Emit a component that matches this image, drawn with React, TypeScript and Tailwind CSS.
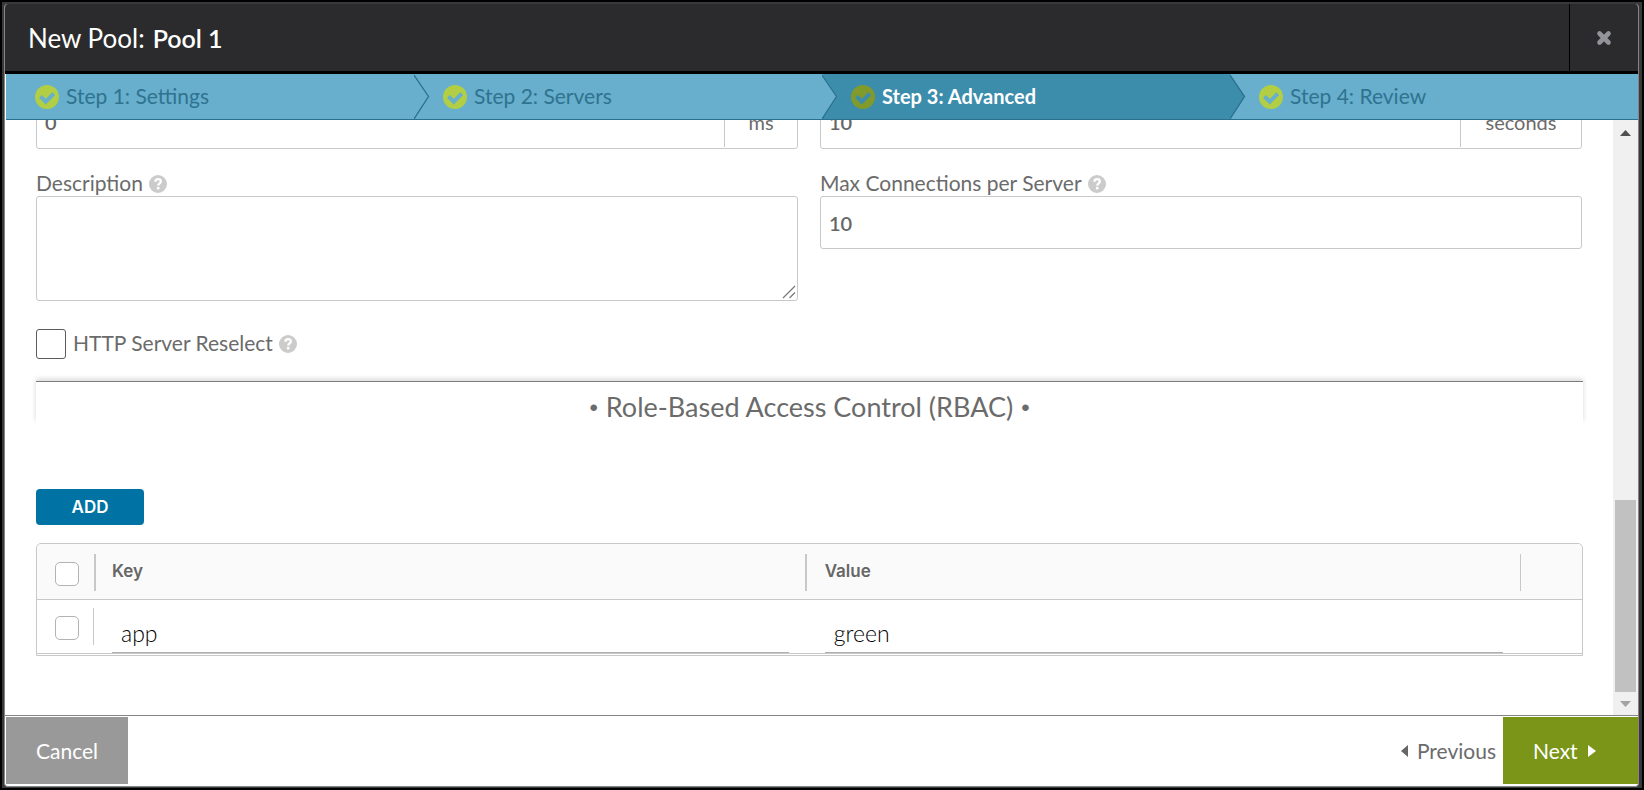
import React from "react";
import clsx from "clsx";

function CheckBadge() {
  return (
    <svg viewBox="0 0 24 24" className="size-6 shrink-0" aria-hidden="true">
      <circle cx="12" cy="12" r="12" fill="currentColor" />
      <path d="M5.500 11.400l5.300 5.300L18.800 8.700" fill="none" strokeWidth="4" className="stroke-[var(--step)]" />
    </svg>
  );
}

function StepArrow() {
  return (
    <svg viewBox="0 0 16 45" className="absolute top-0 left-full z-10 h-full w-4" aria-hidden="true">
      <path d="M0 0L15 22.500L0 45Z" className="fill-[var(--step)]" />
      <path d="M0 1L14.500 22.500L0 45" fill="none" stroke="#2b718d" strokeWidth="1.3" />
    </svg>
  );
}

function Help({ label }: { label: string }) {
  return (
    <button type="button" aria-label={label} className="shrink-0">
      <svg viewBox="0 0 18 18" className="size-[18px]" aria-hidden="true">
        <circle cx="9" cy="9" r="9" fill="#cbcbcb" />
        <path
          d="M6.200 6.700C6.500 4.900 7.500 4.200 9.100 4.200C10.800 4.200 11.800 5.100 11.800 6.500C11.800 8.400 9.300 8.400 9.200 10.600"
          fill="none"
          stroke="#fff"
          strokeWidth="2.300"
        />
        <rect x="7.900" y="11.900" width="2.500" height="2.500" fill="#fff" />
      </svg>
    </button>
  );
}

const steps = [
  { name: "Step 1: Settings" },
  { name: "Step 2: Servers" },
  { name: "Step 3: Advanced", active: true },
  { name: "Step 4: Review" },
];

function Steps() {
  return (
    <nav className="ml-px shrink-0 border-b border-[#2b718d]">
      <ol className="grid grid-cols-4">
        {steps.map((s, i) => (
          <li
            key={s.name}
            className={clsx(
              "relative",
              s.active ? "bg-[#3c8cac] [--step:#3c8cac]" : "bg-[#67afcc] [--step:#67afcc]"
            )}
          >
            <a
              href="#"
              className={clsx(
                "flex h-[45px] items-center gap-[7px] pl-[29px]",
                s.active ? "text-[20px] font-bold text-white" : "text-[21px] text-[#2f7390]"
              )}
            >
              <span className={s.active ? "text-[#809a2b]" : "text-[#b1ce45]"}>
                <CheckBadge />
              </span>
              <span className="pb-0.5">{s.name}</span>
            </a>
            {i < steps.length - 1 && <StepArrow />}
          </li>
        ))}
      </ol>
    </nav>
  );
}

function UnitField({ value, unit, label, unitClass }: { value: string; unit: string; label: string; unitClass: string }) {
  return (
    <div className="flex h-[53px] rounded-[3px] border border-[#c8c8c8] pb-px">
      <input aria-label={label} defaultValue={value} className="min-w-0 flex-1 px-2 text-xl font-semibold text-[#666] outline-none" />
      <span className={clsx("flex items-center justify-center border-l border-[#c8c8c8] text-xl", unitClass)}>{unit}</span>
    </div>
  );
}

const box = "block appearance-none rounded-[5px] border border-[#b3b3b3] bg-white size-6";
const headCell = "border-b border-[#c8c8c8] bg-[#fafafa] pt-[10px] pb-2 font-semibold";
const cellInput = "block h-[37px] w-full border-b border-[#b0b0b0] px-[9px] pb-0.5 text-[23px] font-light text-black outline-none";

function RbacTable() {
  return (
    <div className="rounded-t-[5px] border border-[#c8c8c8] pb-px">
      <table className="w-full table-fixed border-separate border-spacing-0 text-left">
        <colgroup>
          <col className="w-[59px]" />
          <col className="w-[46%]" />
          <col />
          <col className="w-[61px]" />
        </colgroup>
        <thead className="font-['Inter',sans-serif] text-[17px] text-[#666]">
          <tr>
            <th className={clsx(headCell, "rounded-tl-[5px]")}>
              <div className="flex h-[37px] items-center border-r-2 border-[#c8c8c8] pt-0.5 pl-[18px]">
                <input type="checkbox" aria-label="Select all rows" className={box} />
              </div>
            </th>
            <th className={headCell}>
              <div className="flex h-[37px] items-center border-r-2 border-[#c8c8c8] pb-0.5 pl-4">Key</div>
            </th>
            <th className={headCell}>
              <div className="flex h-[37px] items-center border-r border-[#c8c8c8] pb-0.5 pl-[18px]">Value</div>
            </th>
            <td className="rounded-tr-[5px] border-b border-[#c8c8c8] bg-[#fafafa]" />
          </tr>
        </thead>
        <tbody>
          <tr>
            <td className="border-b border-[#c8c8c8] py-2 pr-0.5">
              <div className="flex h-[37px] items-center border-r border-[#c8c8c8] pt-0.5 pl-[18px]">
                <input type="checkbox" aria-label="Select row app" className={box} />
              </div>
            </td>
            <td className="border-b border-[#c8c8c8] pt-4 pr-[18px] pl-4 align-bottom">
              <input aria-label="Key" defaultValue="app" className={cellInput} />
            </td>
            <td className="border-b border-[#c8c8c8] pt-4 pr-[18px] pl-[18px] align-bottom">
              <input aria-label="Value" defaultValue="green" className={cellInput} />
            </td>
            <td className="border-b border-[#c8c8c8]" />
          </tr>
        </tbody>
      </table>
    </div>
  );
}

function Scrollbar() {
  return (
    <div className="flex w-[25px] shrink-0 flex-col items-center bg-[#f0f0f0]" aria-hidden="true">
      <svg viewBox="0 0 11 6" className="mt-[10px] h-[6px] w-[11px]">
        <path d="M5.500 0L11 6H0Z" fill="#505050" />
      </svg>
      <div className="flex-1" />
      <div className="h-[192px] w-[21px] bg-[#c1c1c1]" />
      <svg viewBox="0 0 11 6" className="mt-[9px] mb-2 h-[6px] w-[11px]">
        <path d="M0 0H11L5.500 6Z" fill="#a3a3a3" />
      </svg>
    </div>
  );
}

export default function App() {
  return (
    <div className="flex h-screen bg-black p-[2px] font-['Lato','Liberation_Sans',sans-serif]">
      <div className="flex min-w-0 flex-1 flex-col bg-[#38393a] pt-[2px] pr-[3px] pb-px pl-[2px]">
        <section
          role="dialog"
          aria-labelledby="title"
          className="flex min-h-0 flex-1 flex-col overflow-hidden rounded-[4px] border-x border-b border-[#858585] bg-white text-[#6b6b6b]"
        >
          <header className="flex h-[70px] shrink-0 border-b-[3px] border-black bg-[#2b2b2d] text-white">
            <h1 id="title" className="flex flex-1 items-center gap-2 pt-0.5 pl-[23px] text-[26px]">
              <span>New Pool:</span>
              <span className="text-[25px] font-semibold">Pool 1</span>
            </h1>
            <button type="button" aria-label="Close" className="flex w-[69px] items-center justify-center border-l border-black">
              <svg viewBox="0 0 16 16" className="size-4" aria-hidden="true">
                <path d="M3.500 3.500L12.500 12.500M12.500 3.500L3.500 12.500" stroke="#93939b" strokeWidth="4.600" strokeLinecap="round" />
              </svg>
            </button>
          </header>

          <Steps />

          <div className="flex min-h-0 flex-1 border-b border-[#858585]">
            <main className="flex min-w-0 flex-1 flex-col justify-end overflow-hidden pr-[30px] pb-[59px] pl-[31px] text-[21px]">
              <div className="grid shrink-0 grid-cols-2 gap-x-[22px] pr-px pb-[23px]">
                <UnitField label="Delay" value="0" unit="ms" unitClass="w-[73px]" />
                <UnitField label="Timeout" value="10" unit="seconds" unitClass="w-[121px]" />
              </div>

              <div className="grid shrink-0 grid-cols-2 gap-x-[22px] pr-px">
                <div>
                  <div className="flex h-6 items-center gap-[6px]">
                    <label htmlFor="description" className="pb-0.5">Description</label>
                    <Help label="About description" />
                  </div>
                  <div className="relative">
                    <textarea id="description" className="block h-[105px] w-full resize-none rounded-[3px] border border-[#c8c8c8] px-2 outline-none" />
                    <svg viewBox="0 0 14 14" className="absolute right-[2px] bottom-[2px] size-[14px]" aria-hidden="true">
                      <path d="M1 13L13 1M7.500 13L13 7.500" stroke="#777" strokeWidth="1.200" />
                    </svg>
                  </div>
                </div>
                <div>
                  <div className="flex h-6 items-center gap-[6px]">
                    <label htmlFor="max" className="pb-0.5">Max Connections per Server</label>
                    <Help label="About max connections" />
                  </div>
                  <input id="max" defaultValue="10" className="block h-[53px] w-full rounded-[3px] border border-[#c8c8c8] px-2 text-xl font-semibold text-[#666] outline-none" />
                </div>
              </div>

              <div className="mt-7 flex h-[30px] shrink-0 items-center">
                <input id="reselect" type="checkbox" className="size-[30px] appearance-none rounded-[3px] border border-[#5c5c5c] bg-white" />
                <label htmlFor="reselect" className="mr-[6px] ml-[7px] pb-0.5">HTTP Server Reselect</label>
                <Help label="About HTTP server reselect" />
              </div>

              <h2 className="mt-[22px] flex h-[42px] shrink-0 items-center justify-center gap-2 border-t border-[#7d7d7d] pt-[10px] text-[27px] shadow-[0_-2px_5px_rgba(0,0,0,0.16)] [clip-path:inset(-8px_-4px_0_-4px)]">
                <span className="font-['Liberation_Sans',sans-serif] text-[24px]">•</span>
                <span>Role-Based Access Control (RBAC)</span>
                <span className="font-['Liberation_Sans',sans-serif] text-[24px]">•</span>
              </h2>

              <div className="mt-[66px] mb-[18px] shrink-0">
                <button type="button" className="block h-9 w-[108px] rounded-[4px] bg-[#0072a3] pt-0.5 font-['Inter',sans-serif] text-[17px] font-semibold text-white">
                  ADD
                </button>
              </div>

              <div className="shrink-0">
                <RbacTable />
              </div>
            </main>
            <Scrollbar />
          </div>

          <footer className="flex h-[70px] shrink-0 items-stretch pt-px pb-0.5 pl-px text-[21px]">
            <button type="button" className="w-[122px] bg-[#999] text-white">Cancel</button>
            <div className="flex-1" />
            <button type="button" className="flex items-center gap-[9px] pr-[7px]">
              <svg viewBox="0 0 7 12" className="h-3 w-[7px]" aria-hidden="true">
                <path d="M7 0V12L0 6Z" fill="#666" />
              </svg>
              <span>Previous</span>
            </button>
            <button type="button" className="flex w-[135px] items-center gap-[10px] bg-[#7b9518] pl-[30px] text-white">
              <span>Next</span>
              <svg viewBox="0 0 8 12" className="h-3 w-2" aria-hidden="true">
                <path d="M0 0V12L8 6Z" fill="#fff" />
              </svg>
            </button>
          </footer>
        </section>
      </div>
    </div>
  );
}
